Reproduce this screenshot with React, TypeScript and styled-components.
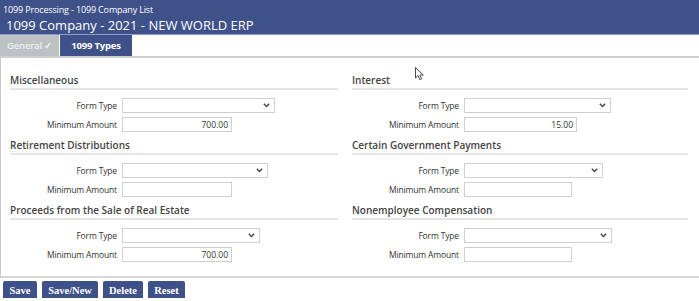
import styled, { createGlobalStyle } from 'styled-components';

const GlobalStyle = createGlobalStyle`
  body {
    margin: 0;
    background: #fff;
    font-family: 'Open Sans', 'Noto Sans', sans-serif;
    color: #333;
  }
`;

const Page = styled.div`
  width: 699px;
  height: 301px;
  position: relative;
  overflow: hidden;
`;

const Header = styled.header`
  height: 35px;
  background: #3f5189;
  border-bottom: 1px solid #8d9bd0;
  color: #fff;
  padding: 4px 0 0 3px;
  box-sizing: border-box;
`;

const Breadcrumb = styled.div`
  font-size: 9px;
  line-height: 12px;
  letter-spacing: -0.15px;
`;

const Title = styled.h1`
  margin: 1px 0 0 3px;
  font-size: 13px;
  font-weight: 400;
  line-height: 16px;
  letter-spacing: 0;
`;

const TabBar = styled.nav`
  display: flex;
  gap: 1px;
  height: 21px;
  border-bottom: 2px solid #cfcfcf;
`;

const Tab = styled.div<{ $active?: boolean }>`
  display: flex;
  align-items: center;
  justify-content: center;
  width: ${p => (p.$active ? '72px' : '59px')};
  background: ${p => (p.$active ? '#3f5189' : '#bcc1c4')};
  color: ${p => (p.$active ? '#fff' : '#eef0f1')};
  font-size: 9.5px;
  font-weight: ${p => (p.$active ? 700 : 600)};
  letter-spacing: -0.2px;
`;

const Panel = styled.main`
  border-left: 1px solid #c8c8c8;
  border-bottom: 2px solid #d6d6d6;
  padding: 15px 10px 8px 9px;
  display: grid;
  grid-template-columns: 328px 336px;
  column-gap: 14px;
`;

const Column = styled.div`
  display: flex;
  flex-direction: column;
`;

const Section = styled.section`
  display: flex;
  flex-direction: column;
  gap: 4px;
  margin-bottom: 6px;
`;

const Heading = styled.h2`
  margin: 0 0 4px;
  font-size: 10px;
  font-weight: 600;
  line-height: 14px;
  color: #444;
  padding-bottom: 1px;
  border-bottom: 2px solid #e6e6e6;
`;

const Row = styled.label`
  display: flex;
  align-items: center;
  gap: 5px;
  height: 15px;
`;

const Label = styled.span`
  width: 107px;
  text-align: right;
  font-size: 8.5px;
  color: #333;
  letter-spacing: -0.15px;
`;

const Select = styled.div<{ $w: number }>`
  width: ${p => p.$w}px;
  height: 15px;
  box-sizing: border-box;
  border: 1px solid #cfcfcf;
  background: #fff;
  display: flex;
  align-items: center;
  justify-content: flex-end;
  padding-right: 4px;
`;

const Input = styled.div<{ $w: number }>`
  width: ${p => p.$w}px;
  height: 15px;
  box-sizing: border-box;
  border: 1px solid #cfcfcf;
  background: #fff;
  font-size: 8.5px;
  line-height: 13px;
  text-align: right;
  padding-right: 3px;
  color: #333;
`;

const ButtonBar = styled.div`
  display: flex;
  gap: 5px;
  padding: 3px 0 0 3px;
`;

const Button = styled.button<{ $w: number }>`
  width: ${p => p.$w}px;
  height: 17px;
  margin: 0;
  padding: 2px 0 0;
  border: none;
  border-radius: 2px 2px 0 0;
  background: #3f5189;
  color: #fff;
  font-family: 'Liberation Serif', serif;
  font-weight: 700;
  font-size: 10.5px;
`;

const Cursor = styled.svg`
  position: absolute;
  left: 415px;
  top: 67px;
`;

const Chevron = () => (
  <svg width="7" height="5" viewBox="0 0 7 5">
    <path d="M0.8 0.8 L3.5 3.6 L6.2 0.8" fill="none" stroke="#444" strokeWidth="1.4" />
  </svg>
);

type Field = { title: string; select: number; input: number; amount?: string };

const LEFT: Field[] = [
  { title: 'Miscellaneous', select: 153, input: 110, amount: '700.00' },
  { title: 'Retirement Distributions', select: 146, input: 110 },
  { title: 'Proceeds from the Sale of Real Estate', select: 138, input: 110, amount: '700.00' },
];

const RIGHT: Field[] = [
  { title: 'Interest', select: 147, input: 113, amount: '15.00' },
  { title: 'Certain Government Payments', select: 139, input: 108 },
  { title: 'Nonemployee Compensation', select: 148, input: 108 },
];

function FormSection({ title, select, input, amount }: Field) {
  return (
    <Section>
      <Heading>{title}</Heading>
      <Row>
        <Label>Form Type</Label>
        <Select $w={select}>
          <Chevron />
        </Select>
      </Row>
      <Row>
        <Label>Minimum Amount</Label>
        <Input $w={input}>{amount}</Input>
      </Row>
    </Section>
  );
}

export default function App() {
  return (
    <Page>
      <GlobalStyle />
      <Header>
        <Breadcrumb>1099 Processing - 1099 Company List</Breadcrumb>
        <Title>1099 Company - 2021 - NEW WORLD ERP</Title>
      </Header>
      <TabBar>
        <Tab>General ✓</Tab>
        <Tab $active>1099 Types</Tab>
      </TabBar>
      <Panel>
        <Column>
          {LEFT.map(f => (
            <FormSection key={f.title} {...f} />
          ))}
        </Column>
        <Column>
          {RIGHT.map(f => (
            <FormSection key={f.title} {...f} />
          ))}
        </Column>
      </Panel>
      <ButtonBar>
        <Button $w={34}>Save</Button>
        <Button $w={56}>Save/New</Button>
        <Button $w={40}>Delete</Button>
        <Button $w={37}>Reset</Button>
      </ButtonBar>
      <Cursor width="11" height="15" viewBox="0 0 11 15">
        <path d="M0.5 0.5 L0.5 11 L3 8.6 L4.8 12.6 L6.6 11.8 L4.9 8 L8.3 8 Z" fill="#fff" stroke="#333" strokeWidth="0.9" />
      </Cursor>
    </Page>
  );
}
